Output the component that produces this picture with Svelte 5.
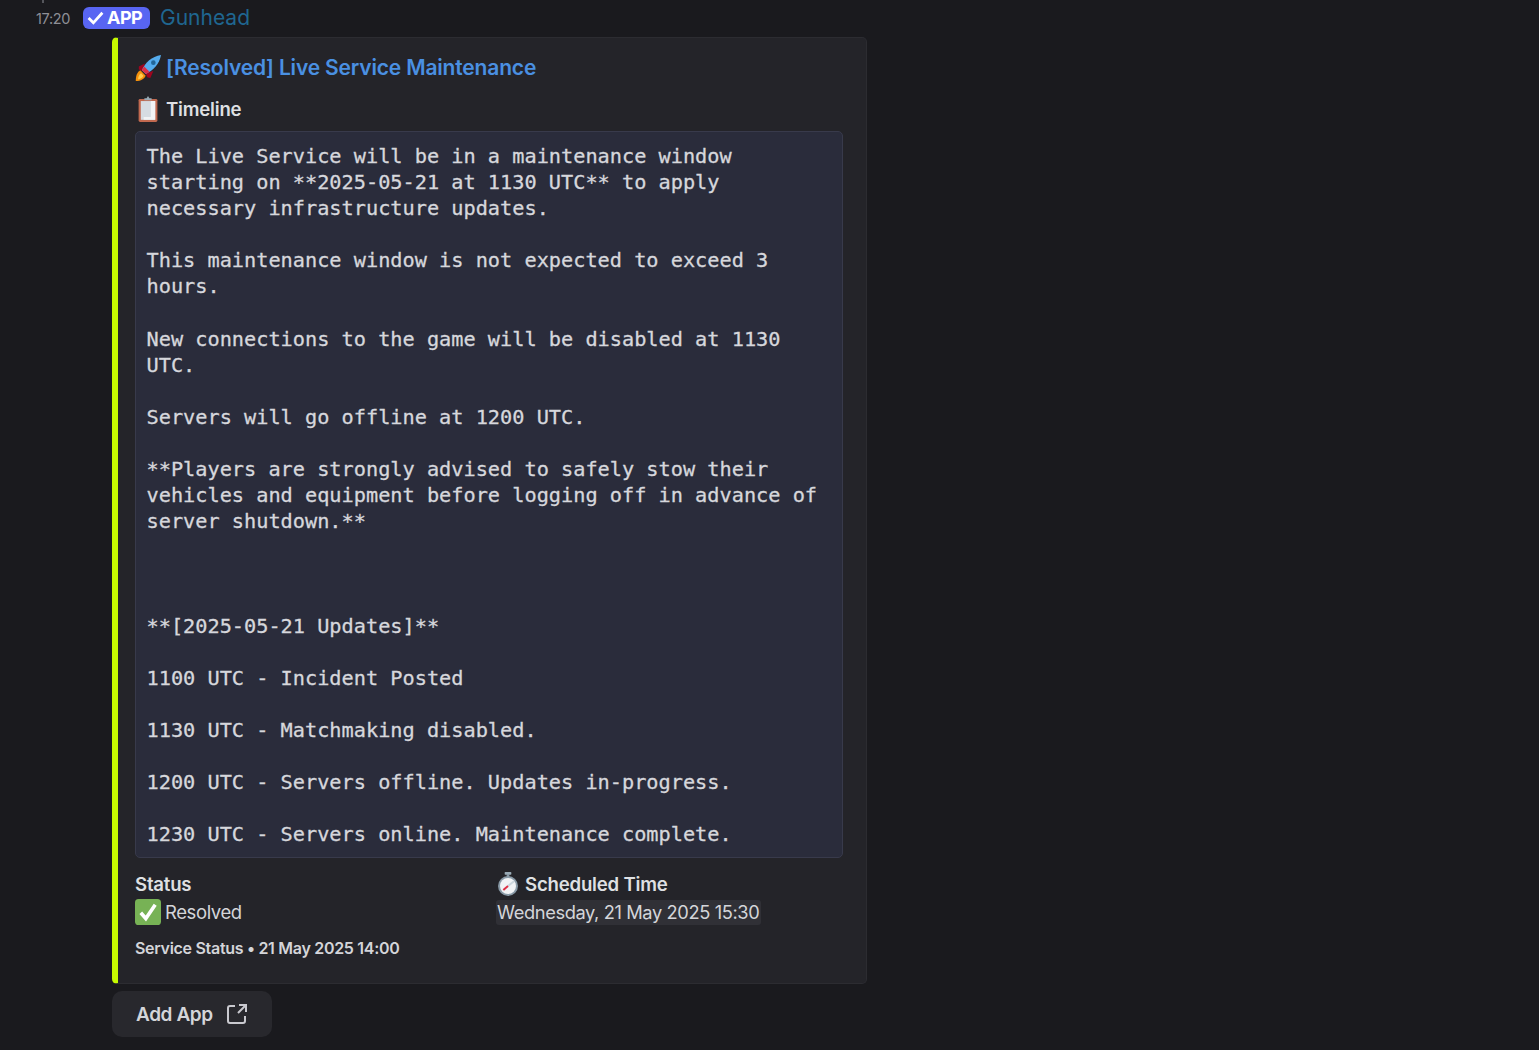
<script>
  const code = `The Live Service will be in a maintenance window
starting on **2025-05-21 at 1130 UTC** to apply
necessary infrastructure updates.

This maintenance window is not expected to exceed 3
hours.

New connections to the game will be disabled at 1130
UTC.

Servers will go offline at 1200 UTC.

**Players are strongly advised to safely stow their
vehicles and equipment before logging off in advance of
server shutdown.**



**[2025-05-21 Updates]**

1100 UTC - Incident Posted

1130 UTC - Matchmaking disabled.

1200 UTC - Servers offline. Updates in-progress.

1230 UTC - Servers online. Maintenance complete.`;
</script>

<main class="page">
  <span class="tick"></span>
  <header class="head">
    <time class="stamp">17:20</time>
    <span class="badge">
      <svg width="17" height="17" viewBox="0 0 16 16" aria-hidden="true"><path d="M1.5 8.5 6 13 14.5 3.5" fill="none" stroke="#fff" stroke-width="2.6" /></svg>
      APP
    </span>
    <span class="author">Gunhead</span>
  </header>

  <article class="embed">
    <h2 class="title">
      <svg class="emoji" viewBox="1 1 34 34" aria-hidden="true">
        <path d="M2 35c0-7 2-12 6-14l7 7c-2 4-6 7-13 7z" fill="#f4900c"/>
        <path d="M5 33c0-4 2-7 4-8l3 3c-1 2-3 4-7 5z" fill="#ffcc4d"/>
        <path d="M6 16l8-4-3 10-5-2zM21 31l4-9-10 3 2 5z" fill="#a0041e"/>
        <path d="M10 21C14 11 23 3 35 1c-2 12-10 20-20 25z" fill="#55acee"/>
        <path d="M10 21c1-2 2-3 3-5l7 7c-2 1-3 2-5 3z" fill="#dd2e44"/>
        <circle cx="25" cy="11" r="3" fill="#269"/>
      </svg>
      <span>[Resolved] Live Service Maintenance</span>
    </h2>

    <h3 class="field-name">
      <svg class="emoji" viewBox="0 0 36 36" aria-hidden="true">
        <rect x="5" y="4" width="26" height="32" rx="2" fill="#c1694f"/>
        <rect x="8" y="7" width="20" height="26" fill="#d6dce2"/>
        <path d="M22 7h6v26H12v-4h10z" fill="#f1f3f5"/>
        <path d="M13 6V3h3l2-3 2 3h3v3z" fill="#99aab5"/>
      </svg>
      Timeline
    </h3>

    <pre class="code">{code}</pre>

    <div class="fields">
      <div class="field">
        <div class="field-name">Status</div>
        <div class="field-value">
          <svg class="emoji" viewBox="0 0 36 36" aria-hidden="true">
            <rect width="36" height="36" rx="5" fill="#77b255"/>
            <path d="M8 19l7 8L28 8" fill="none" stroke="#fff" stroke-width="5"/>
          </svg>
          Resolved
        </div>
      </div>
      <div class="field">
        <div class="field-name">
          <svg class="emoji clock" viewBox="0 0 36 36" aria-hidden="true">
            <rect x="13" y="0" width="10" height="4" rx="1" fill="#99aab5"/>
            <rect x="16" y="3" width="4" height="5" fill="#8899a6"/>
            <circle cx="18" cy="21" r="15" fill="#8899a6"/>
            <circle cx="18" cy="21" r="12" fill="#f1f3f5"/>
            <path d="M18 21 27 14" stroke="#ccd6dd" stroke-width="3"/>
            <path d="M18 21 11 27" stroke="#dd2e44" stroke-width="3"/>
          </svg>
          Scheduled Time
        </div>
        <div class="field-value"><span class="mention">Wednesday, 21 May 2025 15:30</span></div>
      </div>
    </div>

    <footer class="foot">Service Status • 21 May 2025 14:00</footer>
  </article>

  <button class="add" type="button">
    Add App
    <svg width="24" height="24" viewBox="0 0 24 24" aria-hidden="true">
      <path d="M10 4H5a2 2 0 0 0-2 2v13a2 2 0 0 0 2 2h13a2 2 0 0 0 2-2v-5" fill="none" stroke="#c9c9cf" stroke-width="2"/>
      <path d="M14 3h7v7M21 3l-8 8" fill="none" stroke="#c9c9cf" stroke-width="2"/>
    </svg>
  </button>
</main>

<style>
  :global(body) {
    margin: 0;
    background: #1a1a1e;
  }
  .page {
    position: relative;
    height: 1050px;
    box-sizing: border-box;
    padding-top: 4px;
    overflow: hidden;
    font-family: Inter, "Noto Sans", sans-serif;
    color: #dcdcdf;
  }
  .tick {
    position: absolute;
    left: 42px;
    top: 0;
    width: 2px;
    height: 3px;
    background: #55565c;
  }
  .head {
    display: flex;
    align-items: center;
    height: 26px;
    padding-left: 36px;
  }
  .stamp {
    width: 47px;
    font-size: 14.5px;
    letter-spacing: -0.35px;
    color: #8e8f96;
    padding-top: 3px;
  }
  .badge {
    display: flex;
    align-items: center;
    gap: 3px;
    box-sizing: border-box;
    width: 67px;
    height: 22px;
    margin-top: 1px;
    padding-left: 4px;
    border-radius: 6px;
    background: #5865f2;
    color: #fff;
    font-size: 18px;
    font-weight: 700;
    letter-spacing: -0.5px;
  }
  .author {
    margin-left: 10px;
    font-size: 21px;
    color: #1f6690;
  }
  .embed {
    box-sizing: border-box;
    width: 755px;
    height: 947px;
    margin: 7px 0 0 112px;
    padding: 13px 24px 0 17px;
    background: #242429;
    border: 1px solid #2c2c31;
    border-left: 6px solid #c6fa00;
    border-radius: 5px;
  }
  .title {
    display: flex;
    align-items: center;
    gap: 5px;
    margin: 0;
    height: 33px;
    font-size: 21px;
    font-weight: 600;
    letter-spacing: -0.17px;
    color: #4a90e2;
  }
  .emoji {
    width: 26px;
    height: 26px;
    flex: none;
  }
  .emoji.clock {
    width: 24px;
  }
  .field-name {
    display: flex;
    align-items: center;
    gap: 5px;
    margin: 0;
    height: 26px;
    font-size: 18.6px;
    font-weight: 600;
    letter-spacing: -0.2px;
    color: #dfe0e3;
  }
  h3.field-name {
    margin-top: 12px;
  }
  .code {
    box-sizing: border-box;
    width: 708px;
    height: 727px;
    margin: 9px 0 0;
    padding: 11px 10.5px 0;
    background: #2a2c3b;
    border: 1px solid #383a4b;
    border-radius: 5px;
    font-family: "DejaVu Sans Mono", monospace;
    font-size: 20.25px;
    line-height: 26.1px;
    -webkit-text-stroke: 0.3px;
    color: #d6d7dc;
    white-space: pre;
    overflow: hidden;
  }
  .fields {
    display: grid;
    grid-template-columns: 361px 1fr;
    margin-top: 13px;
  }
  .field-value {
    display: flex;
    align-items: center;
    gap: 4px;
    height: 29px;
    font-size: 18.5px;
    letter-spacing: -0.4px;
    color: #d4d5d9;
  }
  .mention {
    margin-top: 2px;
    padding: 0 2px 0 1px;
    line-height: 25px;
    font-size: 18.3px;
    background: #303036;
    border-radius: 3px;
  }
  .foot {
    margin-top: 12px;
    font-size: 16px;
    font-weight: 600;
    letter-spacing: -0.3px;
    color: #d4d5d9;
  }
  .add {
    display: flex;
    align-items: center;
    gap: 12px;
    box-sizing: border-box;
    width: 160px;
    height: 46px;
    margin: 7px 0 0 112px;
    padding: 0 0 0 24px;
    border: 0;
    border-radius: 10px;
    background: #28282d;
    color: #d4d5d9;
    font-family: inherit;
    font-size: 19px;
    font-weight: 600;
    letter-spacing: -0.4px;
  }
</style>
